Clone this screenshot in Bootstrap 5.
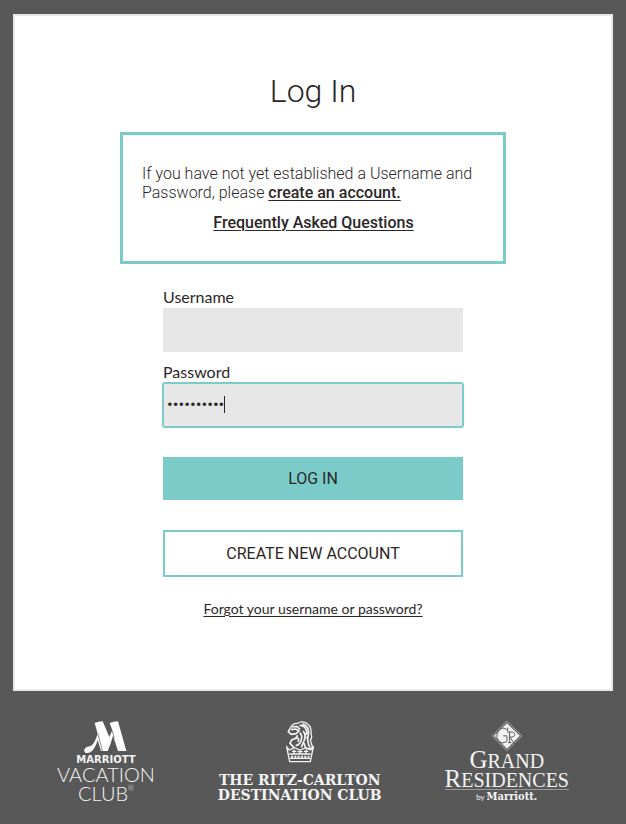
<!DOCTYPE html>
<html lang="en">
<head>
<meta charset="utf-8">
<meta name="viewport" content="width=device-width, initial-scale=1">
<title>Log In</title>
<link href="https://cdn.jsdelivr.net/npm/bootstrap@5.3.0/dist/css/bootstrap.min.css" rel="stylesheet">
<style>
  body { background: #585858; color: #2b2727; font-family: Roboto, sans-serif; font-size: 16px; line-height: 19px; }
  a { color: inherit; text-underline-offset: 2px; text-decoration-thickness: 1px; }
  .page { padding: 14px 8px 16px; }
  .login-panel { max-width: 600px; border: 2px solid #e8e8e8; padding: 55px 18px 71px; }
  .login-title { margin-bottom: 21px; font-size: 32px; font-weight: 300; line-height: 40px; }
  .notice { max-width: 386px; border: 3px solid #7bccc8; padding: 29px 18px 29px 19px; font-weight: 300; }
  .notice p { margin-bottom: 11px; }
  .notice a { font-weight: 500; }
  .login-form { max-width: 300px; padding-top: 23px; }
  .login-form label, .forgot { font-family: Lato, sans-serif; }
  .login-form label { padding-bottom: 2px; line-height: 19px; }
  .login-form .field { margin-bottom: 10px; }
  .login-form .form-control { height: 44px; padding: 0 4px 2px; border: 0; border-radius: 0; background: #e7e7e7; color: #2b2727; box-shadow: none; font-size: 16px; }
  .login-form .password-box { border-radius: 2px; box-shadow: 0 0 0 1px #7bccc8, inset 0 0 0 1px #7bccc8; font-size: 17px; caret-color: transparent; }
  .caret-bar { position: absolute; left: 61px; top: 13px; width: 1px; height: 17px; background: #2b2727; }
  .login-form .btn { --bs-btn-color: #2b2727; --bs-btn-hover-color: #2b2727; --bs-btn-border-radius: 0; margin-top: 30px; font-size: 16px; line-height: 19px; }
  .btn-login { --bs-btn-bg: #7bccc8; --bs-btn-hover-bg: #69bcb8; padding: 12px; border: 0; }
  .btn-create { --bs-btn-border-color: #7bccc8; --bs-btn-hover-border-color: #69bcb8; padding: 12px; border-width: 2px; }
  .help-line { margin: 22px 0 0; }
  .forgot { font-size: 14px; line-height: 18px; }
  .brands { max-width: 512px; padding-top: 30px; color: #f4f4f4; white-space: nowrap; }
  .brand-mvc { font-family: Lato, sans-serif; font-size: 20px; line-height: 19px; font-weight: 300; }
  .brand-mvc .maker { font-family: "DejaVu Sans", sans-serif; font-size: 10px; line-height: 11px; font-weight: 700; }
  .brand-mvc sup { font-size: 7px; top: -10px; }
  .brand-ritz { font-family: "DejaVu Serif", serif; font-size: 14px; line-height: 15px; font-weight: 700; }
  .brand-ritz svg { margin-bottom: 10px; }
  .brand-grand { font-family: "Liberation Serif", serif; font-size: 20px; line-height: 18px; }
  .brand-grand .initial { font-size: 25px; }
  .brand-grand .byline { border-top: 1px solid #999; font-family: Lato, sans-serif; font-size: 8px; line-height: 14px; }
  .brand-grand b { font-family: "DejaVu Serif Condensed", "DejaVu Serif", serif; font-size: 11px; }
</style>
<script src="https://cdn.jsdelivr.net/npm/bootstrap@5.3.0/dist/js/bootstrap.bundle.min.js"></script>
</head>
<body>
<div class="container-fluid page">
  <main class="login-panel bg-white mx-auto">
    <h1 class="login-title text-center">Log In</h1>
    <section class="notice mx-auto">
      <p>If you have not yet established a Username and Password, please <a href="#">create an account.</a></p>
      <p class="text-center mb-0"><a href="#">Frequently Asked Questions</a></p>
    </section>
    <form class="login-form mx-auto">
      <div class="field">
        <label class="d-block" for="username">Username</label>
        <input class="form-control" id="username" type="text" autocomplete="username">
      </div>
      <div>
        <label class="d-block" for="password">Password</label>
        <div class="position-relative">
          <input class="form-control password-box" id="password" type="password" value="vacation12" autocomplete="current-password" autofocus>
          <span class="caret-bar" aria-hidden="true"></span>
        </div>
      </div>
      <button class="btn btn-login w-100" type="submit">LOG IN</button>
      <button class="btn btn-create w-100" type="button">CREATE NEW ACCOUNT</button>
    </form>
    <p class="help-line text-center"><a class="forgot" href="#">Forgot your username or password?</a></p>
  </main>
  <footer class="brands mx-auto d-flex justify-content-between align-items-start text-center">
    <div class="brand-mvc">
      <svg class="d-block mx-auto" width="44" height="33" viewBox="6 6 132 99" fill="#fff" aria-hidden="true">
        <path d="M38 12Q50 7 62 7L82 54L91 34Q87 22 83 12Q95 7 108 7L133 96H108L93 50Q86 77 77 96H57L47 64Q40 86 30 96Q20 104 10 101Q4 97 9 88Q14 82 24 82Q33 79 40 63L47 44Z"/>
        <path d="M48 45L61 96M91 35L97 58" fill="none" stroke="#585858" stroke-width="2"/>
      </svg>
      <div class="maker">MARRIOTT</div>
      <div>VACATION</div>
      <div>CLUB<sup>®</sup></div>
    </div>
    <div class="brand-ritz">
      <svg class="d-block mx-auto" width="28" height="42" viewBox="0 0 84 126" fill="none" stroke="#f4f4f4" stroke-width="4" aria-hidden="true">
        <path d="M12 23Q18 6 35 7Q45-1 58 5Q78 14 75 38Q80 49 73 58L80 80L60 84"/>
        <path d="M12 23L7 32L15 40L30 38L39 30L29 24L15 26M18 18L32 16L42 25M40 13Q57 13 60 26Q65 34 60 41M49 8Q68 15 68 34L65 56M35 43L29 52L17 57L12 67L24 80M41 35Q51 44 45 59Q42 70 29 74M51 30Q61 41 55 57L46 79M63 46L67 68L71 79M54 66L59 82M31 51Q43 51 35 62" stroke-width="5"/>
        <path d="M2 78L10 87L25 80L42 87L60 80L74 87L82 78L73 122H11ZM10 99H74M24 86V99M18 91H31M42 85V101M34 92H50M60 86V99M54 91H67M12 112H72"/>
        <path d="M15 107H70" stroke-dasharray="6 4" stroke-width="6"/>
      </svg>
      <div>THE RITZ-CARLTON</div>
      <div>DESTINATION CLUB</div>
    </div>
    <div class="brand-grand">
      <svg class="d-block mx-auto" width="32" height="30" viewBox="0 0 96 93" aria-hidden="true">
        <path d="M48 1L94 46L48 92L2 46Z" fill="none" stroke="#ddd" stroke-width="2"/>
        <path d="M48 7L88 46L48 86L8 46Z" fill="#f1f1f1"/>
        <path d="M50 29Q34 14 21 31Q11 49 23 63Q35 73 48 62V46H36M48 34H60Q73 34 72 43Q71 50 57 50L76 78M56 34V67M51 67H62M50 21V30" fill="none" stroke="#585858" stroke-width="3"/>
      </svg>
      <div><span class="initial">G</span>RAND</div>
      <div><span class="initial">R</span>ESIDENCES</div>
      <div class="byline">by <b>Marriott.</b></div>
    </div>
  </footer>
</div>
</body>
</html>
